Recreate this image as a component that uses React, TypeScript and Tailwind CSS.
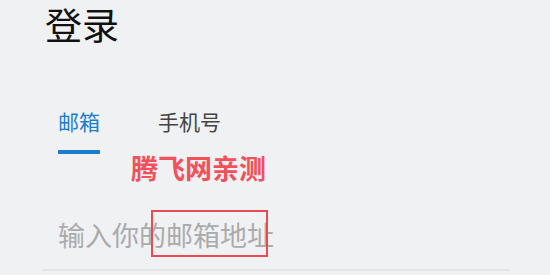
import React, { useState } from 'react';

type TabId = 'email' | 'phone';

const tabs: { id: TabId; label: string }[] = [
  { id: 'email', label: '邮箱' },
  { id: 'phone', label: '手机号' },
];

const cjk = { fontFamily: '"Noto Sans CJK SC", "Noto Sans", sans-serif' };

export default function App() {
  const [active, setActive] = useState<TabId>('email');

  return (
    <div className="relative w-[550px] h-[275px] overflow-hidden bg-[#f0f1f3]" style={cjk}>
      {/* Title */}
      <h1 className="pl-[45px] pt-[2px] text-[37px] leading-[45px] text-[#111] font-normal">登录</h1>

      {/* Tabs */}
      <div className="flex gap-[58px] pl-[58px] mt-[64px]">
        {tabs.map(tab => (
          <button
            key={tab.id}
            onClick={() => setActive(tab.id)}
            className="flex flex-col items-stretch"
          >
            <span
              className={`text-[21px] leading-none ${
                active === tab.id ? 'text-[#1a7dcd]' : 'text-[#444]'
              }`}
            >
              {tab.label}
            </span>
            <span
              className={`mt-[18px] h-[4px] ${active === tab.id ? 'bg-[#1a7dcd]' : 'bg-transparent'}`}
            />
          </button>
        ))}
      </div>

      {/* Input */}
      <div className="ml-[42px] w-[468px] mt-[61px] border-b-2 border-[#e3e4e6] pl-[16px] pb-[15px]">
        <input
          type="email"
          placeholder="输入你的邮箱地址"
          className="w-full bg-transparent outline-none text-[27px] leading-none text-[#333] placeholder:text-[#ababab]"
          style={cjk}
        />
      </div>

      {/* Watermark overlay */}
      <div className="absolute left-[131px] top-[154px] text-[27px] leading-none font-bold text-[#f2505a]">
        腾飞网亲测
      </div>
      <div className="absolute left-[151px] top-[210px] w-[117px] h-[47px] border-2 border-[#ea4a52]" />
    </div>
  );
}
